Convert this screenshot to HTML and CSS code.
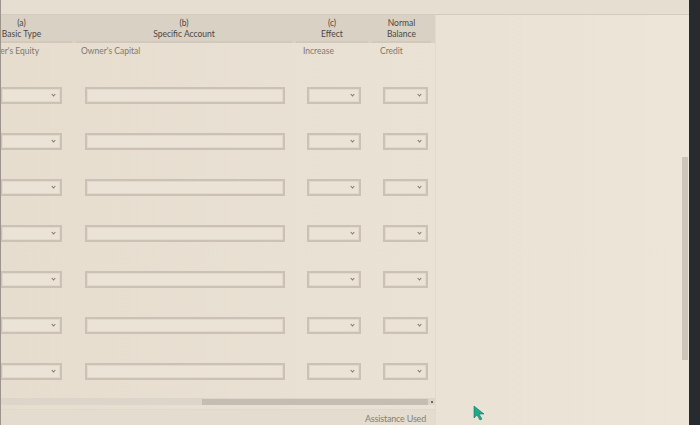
FILE: index.html
```html
<!DOCTYPE html>
<html>
<head>
<meta charset="utf-8">
<link rel="stylesheet" href="styles.css">
</head>
<body>
<div class="screen">
  <div class="page">
    <div class="topbar"></div>
    <div class="body">
      <div class="tablewrap">
        <div class="grid">
          <div class="hcell"><span>(a)</span><span>Basic Type</span></div>
          <div class="hcell"><span>(b)</span><span>Specific Account</span></div>
          <div class="hcell"><span>(c)</span><span>Effect</span></div>
          <div class="hcell"><span>Normal</span><span>Balance</span></div>

          <div class="dcell c1">Owner's Equity</div>
          <div class="dcell c2">Owner's Capital</div>
          <div class="dcell c3">Increase</div>
          <div class="dcell c4">Credit</div>
        </div>
        <div class="rows">
          <div class="irow"><div class="sel s1"><i></i></div><div class="txt"></div><div class="sel s3"><i></i></div><div class="sel s4"><i></i></div></div>
          <div class="irow"><div class="sel s1"><i></i></div><div class="txt"></div><div class="sel s3"><i></i></div><div class="sel s4"><i></i></div></div>
          <div class="irow"><div class="sel s1"><i></i></div><div class="txt"></div><div class="sel s3"><i></i></div><div class="sel s4"><i></i></div></div>
          <div class="irow"><div class="sel s1"><i></i></div><div class="txt"></div><div class="sel s3"><i></i></div><div class="sel s4"><i></i></div></div>
          <div class="irow"><div class="sel s1"><i></i></div><div class="txt"></div><div class="sel s3"><i></i></div><div class="sel s4"><i></i></div></div>
          <div class="irow"><div class="sel s1"><i></i></div><div class="txt"></div><div class="sel s3"><i></i></div><div class="sel s4"><i></i></div></div>
          <div class="irow"><div class="sel s1"><i></i></div><div class="txt"></div><div class="sel s3"><i></i></div><div class="sel s4"><i></i></div></div>
        </div>
        <div class="hscroll"><div class="thumb"></div><span class="arrow"></span></div>
        <div class="footer"><span class="assist">Assistance Used</span></div>
      </div>
      <div class="side">
        <div class="vscroll"></div>
      </div>
    </div>
    <svg class="cursor" width="12" height="16" viewBox="0 0 12 16"><path d="M1 1 L1 13 L4 10 L7 15 L9 14 L6 9 L11 9 Z" fill="#1fa98a" stroke="#137a63" stroke-width="0.6"/></svg>
  </div>
  <div class="bezel"></div>
</div>
</body>
</html>
```
FILE: styles.css
```css
html, body {
  margin: 0;
  padding: 0;
}
body {
  width: 700px;
  height: 425px;
  overflow: hidden;
  font-family: Lato, "Open Sans", sans-serif;
  background: #e8dfd1;
}
.screen {
  display: flex;
  width: 700px;
  height: 425px;
}
.page {
  position: relative;
  width: 689px;
  height: 425px;
  background: linear-gradient(90deg, #e6ddcf 0%, #e9e1d3 50%, #ece5d8 100%);
  display: flex;
  flex-direction: column;
  border-left: 1px solid #9a948c;
  box-sizing: border-box;
}
.bezel {
  width: 11px;
  height: 425px;
  background: #272b30;
}
.topbar {
  height: 14px;
  border-bottom: 1px solid #d4cbbd;
  background: #e6ded0;
  flex: none;
}
.body {
  flex: 1;
  display: flex;
  min-height: 0;
}
.tablewrap {
  width: 434px;
  flex: none;
  display: flex;
  flex-direction: column;
  overflow: hidden;
}
.grid {
  display: grid;
  grid-template-columns: 105px 220px 76px 63px;
  margin-left: -30px;
}
.hcell {
  height: 28px;
  background: #d9d1c4;
  box-sizing: border-box;
  display: flex;
  flex-direction: column;
  align-items: center;
  justify-content: center;
  font-size: 8.5px;
  line-height: 11px;
  color: #4b463f;
  position: relative;
  padding-right: 4px;
}
.hcell::after {
  content: "";
  position: absolute;
  left: 0;
  right: 4px;
  bottom: 0;
  height: 2px;
  background: #d2c9bc;
}
.hcell:last-child {
  padding-right: 0;
}
.hcell:last-child::after {
  right: 0;
}
.dcell {
  height: 29px;
  padding: 3px 0 0 5px;
  box-sizing: border-box;
  font-size: 8.5px;
  color: #7e786f;
}
.c1 { padding-left: 11px; }
.c3 { padding-left: 7px; }
.c4 { padding-left: 8px; }
.rows {
  display: flex;
  flex-direction: column;
}
.irow {
  height: 46px;
  display: flex;
  align-items: center;
}
.sel, .txt {
  height: 17px;
  box-sizing: border-box;
  border: 2px solid #cbc1b4;
  background: #ebe3d5;
  box-shadow: inset 0 0 0 1px #e2d9cb;
  position: relative;
  flex: none;
}
.s1 { width: 62px; margin-left: -1px; }
.txt { width: 200px; margin-left: 23px; }
.s3 { width: 54px; margin-left: 22px; }
.s4 { width: 45px; margin-left: 22px; }
.sel i {
  position: absolute;
  right: 5px;
  top: 4px;
  width: 2px;
  height: 2px;
  border-right: 1px solid #7f776d;
  border-bottom: 1px solid #7f776d;
  transform: rotate(45deg);
}
.hscroll {
  margin-top: 4px;
  height: 7px;
  background: #ddd5c9;
  display: flex;
  align-items: center;
  position: relative;
}
.thumb {
  margin-left: 201px;
  width: 226px;
  height: 6px;
  background: #c5bdb1;
}
.arrow {
  width: 2px;
  height: 2px;
  margin-left: 3px;
  background: #6e675f;
}
.footer {
  margin-top: 4px;
  flex: 1;
  border-top: 1px solid #e0d8cb;
  background: #e4dccf;
  display: flex;
  justify-content: flex-end;
  align-items: flex-end;
  padding-right: 9px;
}
.assist {
  font-size: 9px;
  color: #857e75;
  line-height: 12px;
  letter-spacing: -0.2px;
}
.side {
  flex: 1;
  display: flex;
  justify-content: flex-end;
  border-left: 1px solid #e2dace;
  position: relative;
}
.vscroll {
  margin-top: 142px;
  margin-right: 1px;
  width: 6px;
  height: 203px;
  background: #cdc5b9;
}
.cursor {
  position: absolute;
  left: 472px;
  top: 405px;
}
```
